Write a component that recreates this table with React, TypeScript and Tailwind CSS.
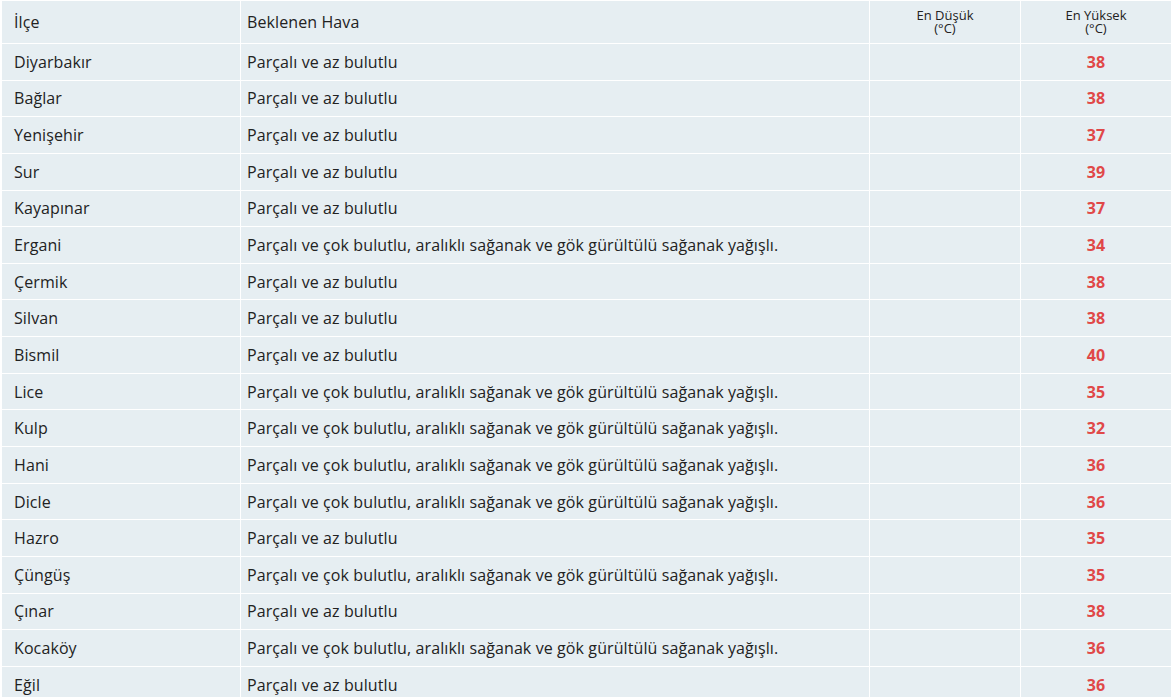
import React from 'react';

const PARTLY = 'Parçalı ve az bulutlu';
const STORM = 'Parçalı ve çok bulutlu, aralıklı sağanak ve gök gürültülü sağanak yağışlı.';

const rows = [
  { name: 'Diyarbakır', weather: PARTLY, max: 38 },
  { name: 'Bağlar', weather: PARTLY, max: 38 },
  { name: 'Yenişehir', weather: PARTLY, max: 37 },
  { name: 'Sur', weather: PARTLY, max: 39 },
  { name: 'Kayapınar', weather: PARTLY, max: 37 },
  { name: 'Ergani', weather: STORM, max: 34 },
  { name: 'Çermik', weather: PARTLY, max: 38 },
  { name: 'Silvan', weather: PARTLY, max: 38 },
  { name: 'Bismil', weather: PARTLY, max: 40 },
  { name: 'Lice', weather: STORM, max: 35 },
  { name: 'Kulp', weather: STORM, max: 32 },
  { name: 'Hani', weather: STORM, max: 36 },
  { name: 'Dicle', weather: STORM, max: 36 },
  { name: 'Hazro', weather: PARTLY, max: 35 },
  { name: 'Çüngüş', weather: STORM, max: 35 },
  { name: 'Çınar', weather: PARTLY, max: 38 },
  { name: 'Kocaköy', weather: STORM, max: 36 },
  { name: 'Eğil', weather: PARTLY, max: 36 }
];

const App = () => {
  return (
    <div className="w-[1172px] h-[697px] overflow-hidden bg-white pt-px px-[2px] font-['Open_Sans',sans-serif] text-[#222]">
      <div className="grid grid-cols-[238px_628px_150px_150px] gap-px">
        {/* header */}
        <div className="h-[42px] bg-[#e6eef2] flex items-center pl-3 text-base tracking-[0.1px]">İlçe</div>
        <div className="h-[42px] bg-[#e6eef2] flex items-center pl-[6px] text-base tracking-[0.1px]">Beklenen Hava</div>
        <div className="h-[42px] bg-[#e6eef2] flex flex-col items-center pt-[8px] text-[13px] leading-[13px]">
          <span>En Düşük</span>
          <span>(°C)</span>
        </div>
        <div className="h-[42px] bg-[#e6eef2] flex flex-col items-center pt-[8px] text-[13px] leading-[13px]">
          <span>En Yüksek</span>
          <span>(°C)</span>
        </div>

        {rows.map(row => (
          <React.Fragment key={row.name}>
            <div className="h-[35.65px] bg-[#e6eef2] flex items-center pl-3 text-base tracking-[0.1px]">{row.name}</div>
            <div className="h-[35.65px] bg-[#e6eef2] flex items-center pl-[6px] text-base tracking-[0.1px]">{row.weather}</div>
            <div className="h-[35.65px] bg-[#e6eef2]" />
            <div className="h-[35.65px] bg-[#e6eef2] flex items-center justify-center text-base font-bold text-[#e04848]">
              {row.max}
            </div>
          </React.Fragment>
        ))}
      </div>
    </div>
  );
};

export default App;
